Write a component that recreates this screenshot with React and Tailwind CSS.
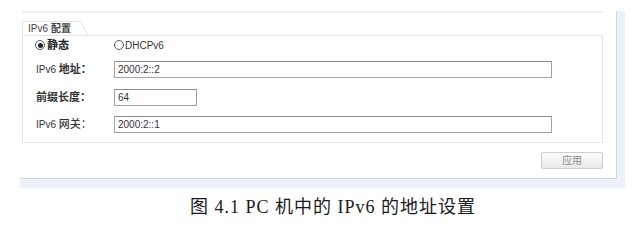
export default function App() {
  const ui = { fontFamily: '"Liberation Sans", "Noto Sans CJK SC", sans-serif' };
  const serif = { fontFamily: '"Liberation Serif", "Noto Sans CJK SC", serif' };
  const Radio = ({ checked }) => (
    <span className="w-[10px] h-[10px] rounded-full border border-[#555] bg-white flex items-center justify-center">
      {checked && <span className="w-[5px] h-[5px] rounded-full bg-[#222]" />}
    </span>
  );
  const Input = ({ value, w }) => (
    <div className={`${w} h-[17px] border border-[#a3a3a3] border-t-[#8c8c8c] bg-white flex items-center pl-[3px] text-[10px] text-[#333]`}>
      {value}
    </div>
  );
  return (
    <div className="w-[634px] h-[224px] bg-white overflow-hidden" style={ui}>
      <div className="ml-[20px] mt-[11px] w-[605px] bg-[#edf1fb] pr-[8px] pb-[9px]">
        <div className="h-[168px] bg-white border-r border-b border-[#d6d6d6] pl-[2px] flex flex-col">
          <div className="w-[581px] h-[2px] bg-[#eeeeee]" />
          <div className="mt-[8px] flex h-[14px]">
            <div className="w-[56px] h-[14px] border-t border-l border-[#e4e4e4] bg-white flex items-end pl-[5px] text-[10px] text-[#444] leading-[13px]">
              IPv6 <span className="ml-[3px] font-bold">配置</span>
            </div>
            <svg width="10" height="14" viewBox="0 0 10 14" className="-mb-px">
              <path d="M0 0.5 L3 0.5 L9.5 14" fill="none" stroke="#e4e4e4" strokeWidth="1" />
            </svg>
          </div>
          <div className="w-[581px] h-[108px] border border-[#e6e6e6] pl-[13px] pt-[2px] text-[11px] text-[#333]">
            <div className="h-[14px] flex items-center">
              <div className="w-[78px] flex items-center gap-[2px] -ml-[1px]">
                <Radio checked />
                <span className="font-bold text-[#222]">静态</span>
              </div>
              <div className="flex items-center gap-[1px] ml-[1px]">
                <Radio />
                <span className="text-[10px]">DHCPv6</span>
              </div>
            </div>
            <div className="mt-[9px] flex items-center">
              <div className="w-[78px] text-[10px]">IPv6 <span className="text-[11px] font-bold">地址：</span></div>
              <Input value="2000:2::2" w="w-[438px]" />
            </div>
            <div className="mt-[11px] flex items-center">
              <div className="w-[78px] font-bold text-[11px]">前缀长度：</div>
              <Input value="64" w="w-[83px]" />
            </div>
            <div className="mt-[10px] flex items-center">
              <div className="w-[78px] text-[10px]">IPv6 <span className="text-[11px] font-medium">网关：</span></div>
              <Input value="2000:2::1" w="w-[438px]" />
            </div>
          </div>
          <div className="mt-[9px] w-[581px] flex justify-end">
            <div className="w-[62px] h-[17px] rounded-[2px] border border-[#cfcfcf] bg-gradient-to-b from-[#fbfbfb] to-[#e9e9e9] flex items-center justify-center text-[10px] text-[#8a8a8a]">
              应用
            </div>
          </div>
        </div>
      </div>
      <div className="mt-[8px] pl-[190px] text-[18px] leading-[22px] text-[#1a1a1a] tracking-[1px] whitespace-nowrap" style={serif}>
        图 4.1 PC 机中的 IPv6 的地址设置
      </div>
    </div>
  );
}
